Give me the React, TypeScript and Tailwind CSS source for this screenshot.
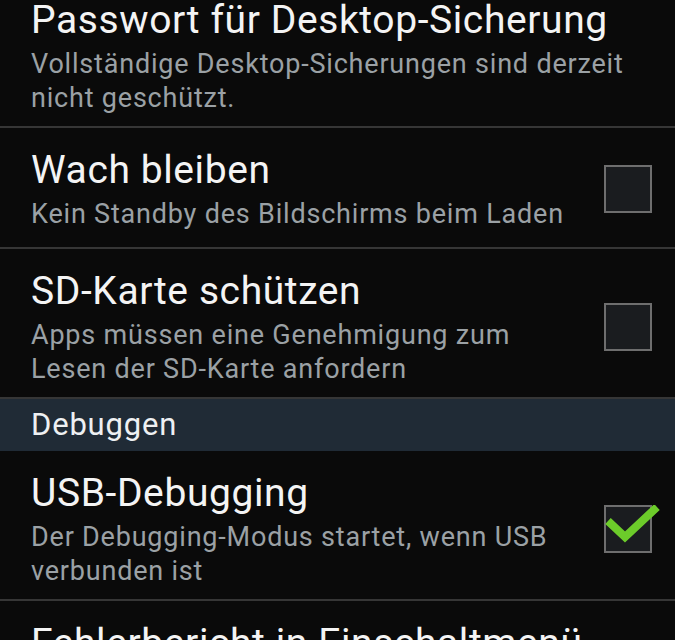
import { ReactNode } from 'react';

type RowProps = {
  title: string;
  summary?: ReactNode;
  checked?: boolean;
  hasBox?: boolean;
  className?: string;
};

const Box = ({ checked }: { checked?: boolean }) => (
  <div className="relative h-[48px] w-[48px] shrink-0 border-2 border-[#6e6e6e] bg-[#1a1c1f]">
    {checked && (
      <svg viewBox="0 0 60 52" className="absolute -top-[2px] -left-[2px] h-[52px] w-[60px]">
        <path
          d="M4 16 L21 32 L53 2"
          fill="none"
          stroke="#6ccb2a"
          strokeWidth="8"
          strokeLinejoin="miter"
        />
      </svg>
    )}
  </div>
);

const Row = ({ title, summary, checked, hasBox, className }: RowProps) => (
  <div className={`flex items-center border-b-2 border-[#363636] pl-[31px] pr-[23px] ${className ?? ''}`}>
    <div className="flex-1">
      <div className="text-[39px] leading-[48px] tracking-[0.6px] text-[#f4f4f4]">{title}</div>
      {summary && (
        <div className="pt-[3px] text-[27px] leading-[34px] tracking-[0.8px] text-[#9ba1a5]">{summary}</div>
      )}
    </div>
    {hasBox && <Box checked={checked} />}
  </div>
);

export default function App() {
  return (
    <div
      className="h-[640px] w-[675px] overflow-hidden bg-[#0a0a0a]"
      style={{ fontFamily: 'Roboto, "Noto Sans", sans-serif' }}
    >
      <div className="-mt-[4px]">
        <Row
          title="Passwort für Desktop-Sicherung"
          summary={
            <>
              Vollständige Desktop-Sicherungen sind derzeit
              <br />
              nicht geschützt.
            </>
          }
          className="pb-[11px]"
        />
        <Row
          title="Wach bleiben"
          summary="Kein Standby des Bildschirms beim Laden"
          hasBox
          className="pt-[18px] pb-[16px]"
        />
        <Row
          title="SD-Karte schützen"
          summary={
            <>
              Apps müssen eine Genehmigung zum
              <br />
              Lesen der SD-Karte anfordern
            </>
          }
          hasBox
          className="pt-[18px] pb-[11px]"
        />
        <div className="flex h-[52px] items-center bg-[#202b36] pl-[31px] text-[31px] tracking-[0.8px] text-[#eef0f2]">
          Debuggen
        </div>
        <Row
          title="USB-Debugging"
          summary={
            <>
              Der Debugging-Modus startet, wenn USB
              <br />
              verbunden ist
            </>
          }
          hasBox
          checked
          className="pt-[18px] pb-[11px]"
        />
        <div className="whitespace-nowrap pl-[31px] pt-[18px] text-[39px] leading-[48px] tracking-[0.6px] text-[#f4f4f4]">
          Fehlerbericht in Einschaltmenü
        </div>
      </div>
    </div>
  );
}
